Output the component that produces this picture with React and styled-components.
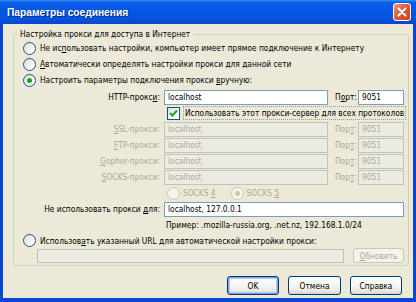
import React from 'react';
import styled, { createGlobalStyle, css } from 'styled-components';

const GlobalStyle = createGlobalStyle`
  html, body {
    margin: 0;
    padding: 0;
  }
  body {
    width: 416px;
    height: 302px;
    overflow: hidden;
    font-family: "DejaVu Sans Condensed", "Liberation Sans", Arial, sans-serif;
    font-size: 8.3px;
    color: #000;
  }
`;

const Window = styled.div`
  width: 416px;
  height: 302px;
  display: flex;
  flex-direction: column;
  background: #0846d4;
`;

const TitleBar = styled.div`
  height: 24px;
  flex: none;
  display: flex;
  align-items: center;
  justify-content: space-between;
  padding: 0 5px 0 7px;
  background: linear-gradient(
    to bottom,
    #3d8ef6 0%,
    #0a5ee9 10%,
    #0556e3 45%,
    #0553df 80%,
    #0947c5 100%
  );
`;

const Title = styled.div`
  color: #fff;
  font-family: "Liberation Sans", Arial, sans-serif;
  font-weight: bold;
  font-size: 10.2px;
  text-shadow: 1px 1px 0 #0a2a80;
`;

const CloseButton = styled.div`
  width: 18px;
  height: 18px;
  box-sizing: border-box;
  border: 1px solid #fff;
  border-radius: 3px;
  background: linear-gradient(135deg, #f09a7a 0%, #e2603e 40%, #c8401f 100%);
  display: flex;
  align-items: center;
  justify-content: center;
`;

const Frame = styled.div`
  flex: 1;
  display: flex;
  padding: 0 4px 4px 3px;
`;

const Client = styled.div`
  flex: 1;
  background: #ece9d8;
  display: flex;
  flex-direction: column;
  padding: 4px 4px 0 10px;
`;

const GroupBox = styled.fieldset`
  margin: 0;
  padding: 0 4px 2px 0;
  border: 1px solid #d0d0bf;
  border-radius: 3px;
  min-width: 0;
`;

const Legend = styled.legend`
  margin-left: 3px;
  padding: 0 3px;
  line-height: 12px;
`;

const RadioRow = styled.label`
  display: flex;
  align-items: center;
  gap: 4px;
  height: ${p => p.$h || 16}px;
  padding-left: 9px;
  color: ${p => (p.$disabled ? '#aca899' : '#000')};
  white-space: nowrap;
`;

const Radio = styled.span`
  flex: none;
  position: relative;
  width: 13px;
  height: 13px;
  box-sizing: border-box;
  border-radius: 50%;
  border: 1px solid ${p => (p.$disabled ? '#cac8bb' : '#1c5180')};
  background: ${p =>
    p.$disabled ? '#f5f4ea' : 'linear-gradient(135deg, #dcdcd4 0%, #ffffff 80%)'};
  ${p =>
    p.$checked &&
    css`
      &::after {
        content: '';
        position: absolute;
        left: 3px;
        top: 3px;
        width: 5px;
        height: 5px;
        border-radius: 50%;
        background: ${p.$disabled ? '#cac8bb' : '#21a121'};
      }
    `}
`;

const ProxyGrid = styled.div`
  display: grid;
  grid-template-columns: 150px 164px 30px 46px;
  grid-auto-rows: 16px;
  align-items: center;
  margin-top: 1px;
`;

const FieldLabel = styled.div`
  text-align: right;
  padding-right: 4px;
  white-space: nowrap;
  color: ${p => (p.$disabled ? '#aca899' : '#000')};
`;

const PortLabel = styled.div`
  padding-left: 7px;
  white-space: nowrap;
  color: ${p => (p.$disabled ? '#aca899' : '#000')};
`;

const TextBox = styled.div`
  height: 15px;
  box-sizing: border-box;
  border: 1px solid ${p => (p.$disabled ? '#c4c2b4' : '#7f9db9')};
  background: ${p => (p.$disabled ? '#ecebe2' : '#fff')};
  color: ${p => (p.$disabled ? '#aca899' : '#000')};
  padding: 0 3px;
  line-height: 13px;
  white-space: nowrap;
  overflow: hidden;
  ${p =>
    p.$span &&
    css`
      grid-column: 2 / 5;
    `}
`;

const CheckRow = styled.div`
  grid-column: 2 / 5;
  display: flex;
  align-items: center;
  gap: 3px;
  padding-left: 3px;
`;

const CheckBox = styled.span`
  flex: none;
  width: 13px;
  height: 13px;
  box-sizing: border-box;
  border: 1px solid #1c5180;
  background: linear-gradient(135deg, #dcdcd4 0%, #ffffff 80%);
  display: flex;
  align-items: center;
  justify-content: center;
`;

const FocusLabel = styled.span`
  flex: 1;
  border: 1px dotted #9a9a90;
  padding: 0 1px;
  line-height: 12px;
  white-space: nowrap;
`;

const SocksRow = styled.div`
  grid-column: 2 / 5;
  display: flex;
  align-items: center;
  gap: 3px;
  padding-left: 3px;
  color: #aca899;
  height: 17px;
`;

const SocksOption = styled.span`
  display: flex;
  align-items: center;
  gap: 3px;
  margin-right: 12px;
`;

const Hint = styled.div`
  grid-column: 2 / 5;
  padding-left: 2px;
`;

const UrlRow = styled.div`
  display: flex;
  align-items: center;
  gap: 9px;
  padding-left: 23px;
  height: 15px;
`;

const UrlBox = styled(TextBox)`
  flex: 1;
  height: 14px;
`;

const Button = styled.div`
  box-sizing: border-box;
  width: ${p => p.$w || 52}px;
  height: ${p => p.$hgt || 19}px;
  display: flex;
  align-items: center;
  justify-content: center;
  border-radius: 3px;
  border: 1px solid ${p => (p.$disabled ? '#c9c7ba' : '#003c74')};
  color: ${p => (p.$disabled ? '#aca899' : '#000')};
  background: ${p =>
    p.$disabled
      ? '#f5f4ea'
      : 'linear-gradient(to bottom, #ffffff 0%, #f3f3ef 60%, #e4e2da 90%, #d6d0c5 100%)'};
  ${p =>
    p.$default &&
    css`
      box-shadow: inset 0 0 0 1px #7aa2e8, inset 0 0 0 2px #b4ccf4;
    `}
`;

const ButtonRow = styled.div`
  display: flex;
  justify-content: flex-end;
  gap: 9px;
  margin-top: 10px;
  padding-right: 7px;
`;

function CloseIcon() {
  return (
    <svg width="10" height="10" viewBox="0 0 10 10">
      <path d="M1.5 1.5 L8.5 8.5 M8.5 1.5 L1.5 8.5" stroke="#fff" strokeWidth="2" strokeLinecap="round" />
    </svg>
  );
}

function CheckMark() {
  return (
    <svg width="9" height="9" viewBox="0 0 9 9">
      <path d="M1 4 L3.5 6.5 L8 1.5" fill="none" stroke="#21a121" strokeWidth="2" />
    </svg>
  );
}

const proxies = [
  { label: <><u>S</u>SL-прокси:</>, port: <>Пор<u>т</u>:</> },
  { label: <><u>F</u>TP-прокси:</>, port: <>Пор<u>т</u>:</> },
  { label: <><u>G</u>opher-прокси:</>, port: <>Пор<u>т</u>:</> },
  { label: <><u>S</u>OCKS-прокси:</>, port: <>Пор<u>т</u>:</> },
];

export default function App() {
  return (
    <>
      <GlobalStyle />
      <Window>
        <TitleBar>
          <Title>Параметры соединения</Title>
          <CloseButton>
            <CloseIcon />
          </CloseButton>
        </TitleBar>
        <Frame>
          <Client>
            <GroupBox>
              <Legend>Настройка прокси для доступа в Интернет</Legend>
              <RadioRow>
                <Radio />
                <span>Не ис<u>п</u>ользовать настройки, компьютер имеет прямое подключение к Интернету</span>
              </RadioRow>
              <RadioRow>
                <Radio />
                <span><u>А</u>втоматически определять настройки прокси для данной сети</span>
              </RadioRow>
              <RadioRow>
                <Radio $checked />
                <span>Настроить параметры подключения прокси <u>в</u>ручную:</span>
              </RadioRow>
              <ProxyGrid>
                <FieldLabel>HTTP-прокс<u>и</u>:</FieldLabel>
                <TextBox>localhost</TextBox>
                <PortLabel>П<u>о</u>рт:</PortLabel>
                <TextBox>9051</TextBox>

                <CheckRow>
                  <CheckBox>
                    <CheckMark />
                  </CheckBox>
                  <FocusLabel>Использовать этот прокси-сервер для всех протоколов</FocusLabel>
                </CheckRow>

                {proxies.map((p, i) => (
                  <React.Fragment key={i}>
                    <FieldLabel $disabled>{p.label}</FieldLabel>
                    <TextBox $disabled>localhost</TextBox>
                    <PortLabel $disabled>{p.port}</PortLabel>
                    <TextBox $disabled>9051</TextBox>
                  </React.Fragment>
                ))}

                <div />
                <SocksRow>
                  <SocksOption>
                    <Radio $disabled />
                    <span>SOCKS <u>4</u></span>
                  </SocksOption>
                  <SocksOption>
                    <Radio $disabled $checked />
                    <span>SOCKS <u>5</u></span>
                  </SocksOption>
                </SocksRow>

                <FieldLabel>Не использовать прокси <u>д</u>ля:</FieldLabel>
                <TextBox $span>localhost, 127.0.0.1</TextBox>

                <div />
                <Hint>Пример: .mozilla-russia.org, .net.nz, 192.168.1.0/24</Hint>
              </ProxyGrid>
              <RadioRow $h={15}>
                <Radio />
                <span>Использов<u>а</u>ть указанный URL для автоматической настройки прокси:</span>
              </RadioRow>
              <UrlRow>
                <UrlBox $disabled />
                <Button $disabled $w={51} $hgt={15}>
                  <span><u>О</u>бновить</span>
                </Button>
              </UrlRow>
            </GroupBox>
            <ButtonRow>
              <Button $default $w={52}>OK</Button>
              <Button $w={53}>Отмена</Button>
              <Button $w={52}>Справка</Button>
            </ButtonRow>
          </Client>
        </Frame>
      </Window>
    </>
  );
}
